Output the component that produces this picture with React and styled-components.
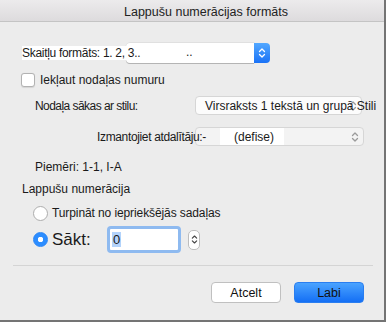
import React from 'react';
import styled, { createGlobalStyle } from 'styled-components';

const GlobalStyle = createGlobalStyle`
    html, body {
        margin: 0;
        padding: 0;
        background: #ececec;
    }
    * {
        box-sizing: border-box;
    }
`;

const Chevrons = ({ color = '#fff', w = 8, h = 12 }) => (
    <svg width={w} height={h} viewBox="0 0 8 12" fill="none">
        <path d="M1.5 4.5 L4 2 L6.5 4.5" stroke={color} strokeWidth="1.3" strokeLinecap="round" strokeLinejoin="round" />
        <path d="M1.5 7.5 L4 10 L6.5 7.5" stroke={color} strokeWidth="1.3" strokeLinecap="round" strokeLinejoin="round" />
    </svg>
);

const App = () => {
    return (
        <>
            <GlobalStyle />
            <Window>
                <TitleBar>
                    <TitleText>Lappušu numerācijas formāts</TitleText>
                </TitleBar>
                <Body>
                    <Row $top={21} $left={22} $h={20}>
                        <WhiteLabel>Skaitļu formāts: 1. 2, 3..</WhiteLabel>
                        <FormatPopup>..</FormatPopup>
                        <BlueStepper>
                            <Chevrons />
                        </BlueStepper>
                    </Row>

                    <Row $top={10} $left={21} $h={14}>
                        <CheckBox />
                        <Label $pad={5}>Iekļaut nodaļas numuru</Label>
                    </Row>

                    <Row $top={9} $left={35}>
                        <Label $w={160} $ls={-0.55}>Nodaļa sākas ar stilu:</Label>
                        <StylePopup $w={167} $light>
                            <PopupText>Virsraksts 1 tekstā un grupā Stili</PopupText>
                            <PopupArrows>
                                <Chevrons color="#9a9a9a" />
                            </PopupArrows>
                        </StylePopup>
                    </Row>

                    <Row $top={12} $left={97}>
                        <Label $w={98} $ls={-0.35}>Izmantojiet atdalītāju:-</Label>
                        <StylePopup $w={169}>
                            <DashBox>(defise)</DashBox>
                            <PopupArrows>
                                <Chevrons color="#9a9a9a" />
                            </PopupArrows>
                        </StylePopup>
                    </Row>

                    <Row $top={13} $left={35} $h={16}>
                        <Label>Piemēri: 1-1, I-A</Label>
                    </Row>

                    <Row $top={6} $left={22} $h={16}>
                        <Label>Lappušu numerācija</Label>
                    </Row>

                    <Row $top={8} $left={33} $h={16}>
                        <Radio />
                        <Label $pad={4} $ls={-0.1}>Turpināt no iepriekšējās sadaļas</Label>
                    </Row>

                    <Row $top={5} $left={33} $h={27}>
                        <Radio $checked />
                        <BigLabel>Sākt:</BigLabel>
                        <FocusInput>
                            <Selected>0</Selected>
                        </FocusInput>
                        <SmallStepper>
                            <Chevrons color="#444" w={7} h={11} />
                        </SmallStepper>
                    </Row>

                    <Separator />

                    <ButtonRow>
                        <Button>Atcelt</Button>
                        <Button $primary>Labi</Button>
                    </ButtonRow>
                </Body>
            </Window>
        </>
    );
}

export default App;

const Window = styled.div`
    width: 386px;
    height: 322px;
    background: #ececec;
    border-right: 2px solid #747474;
    border-bottom: 2px solid #747474;
    font-family: "Liberation Sans", Arial, sans-serif;
    font-size: 12px;
    color: #1a1a1a;
    display: flex;
    flex-direction: column;
    overflow: hidden;
`

const TitleBar = styled.div`
    height: 22px;
    flex: none;
    display: flex;
    align-items: center;
    justify-content: center;
    padding-left: 28px;
    padding-top: 2px;
    background: linear-gradient(#ecebec, #dddbdd);
    border-bottom: 1px solid #c4c4c4;
`

const TitleText = styled.span`
    font-size: 12.5px;
    color: #222;
`

const Body = styled.div`
    display: flex;
    flex-direction: column;
    flex: 1;
`

const Row = styled.div`
    display: flex;
    align-items: center;
    margin-top: ${p => p.$top}px;
    padding-left: ${p => p.$left}px;
    height: ${p => p.$h || 19}px;
    flex: none;
`

const Label = styled.span`
    padding-left: ${p => p.$pad || 0}px;
    width: ${p => p.$w ? `${p.$w}px` : 'auto'};
    flex: none;
    letter-spacing: ${p => p.$ls || 0}px;
    white-space: nowrap;
    position: relative;
    z-index: 1;
`

const WhiteLabel = styled.span`
    background: #fff;
    width: 116px;
    flex: none;
    height: 14px;
    line-height: 14px;
    letter-spacing: -0.3px;
    white-space: nowrap;
    position: relative;
    z-index: 1;
`

const FormatPopup = styled.div`
    width: 128px;
    height: 20px;
    flex: none;
    margin-left: -12px;
    background: #fff;
    border-radius: 4px 0 0 4px;
    box-shadow: 0 1px 0 #b4b4b4, 0 0 0 0.5px #d4d4d4;
    padding-left: 60px;
    line-height: 19px;
`

const BlueStepper = styled.div`
    width: 16px;
    height: 20px;
    flex: none;
    border-radius: 0 4px 4px 0;
    background: linear-gradient(#52a8ff, #1a72f6);
    display: flex;
    align-items: center;
    justify-content: center;
`

const CheckBox = styled.div`
    width: 14px;
    height: 14px;
    flex: none;
    background: #fff;
    border: 1px solid #b2b2b2;
    border-radius: 3px;
    box-shadow: 0 0.5px 1px rgba(0,0,0,0.1);
`

const StylePopup = styled.div`
    position: relative;
    width: ${p => p.$w}px;
    flex: none;
    height: 19px;
    background: ${p => p.$light ? '#fcfcfc' : '#f3f3f3'};
    border: 1px solid #d6d6d6;
    border-radius: 4px;
    display: flex;
    align-items: center;
`

const PopupText = styled.span`
    padding-left: 9px;
    white-space: nowrap;
    position: relative;
    z-index: 1;
`

const PopupArrows = styled.div`
    position: absolute;
    right: 4px;
    top: 3px;
`

const DashBox = styled.span`
    background: #fff;
    margin-left: 24px;
    height: 17px;
    line-height: 19px;
    padding: 0 10px 0 14px;
`

const Radio = styled.div`
    width: 15px;
    height: 15px;
    border-radius: 50%;
    flex: none;
    background: ${p => p.$checked ? 'radial-gradient(circle, #fff 0 2.5px, #2c8dff 3px)' : '#fff'};
    border: 1px solid ${p => p.$checked ? '#2a86f7' : '#adadad'};
`

const BigLabel = styled.span`
    font-size: 17px;
    padding-left: 4px;
    width: 59px;
    flex: none;
`

const FocusInput = styled.div`
    width: 74px;
    height: 27px;
    flex: none;
    border: 3px solid #8ebaf0;
    border-radius: 4px;
    background: #fff;
    padding-left: 2px;
    display: flex;
    align-items: center;
`

const Selected = styled.span`
    background: #b3d3fb;
    font-size: 13px;
    line-height: 15px;
    padding: 0 1px;
`

const SmallStepper = styled.div`
    margin-left: 7px;
    width: 12px;
    height: 20px;
    flex: none;
    border: 1px solid #bdbdbd;
    border-radius: 5px;
    background: #fff;
    display: flex;
    align-items: center;
    justify-content: center;
`

const Separator = styled.div`
    margin: 12px 11px 0 13px;
    height: 1px;
    flex: none;
    background: #d4d4d4;
`

const ButtonRow = styled.div`
    display: flex;
    justify-content: flex-end;
    gap: 13px;
    margin-top: 16px;
    padding-right: 20px;
`

const Button = styled.div`
    width: 70px;
    height: 21px;
    border-radius: 4px;
    display: flex;
    align-items: center;
    justify-content: center;
    font-size: 12.5px;
    color: #111;
    background: ${p => p.$primary ? 'linear-gradient(#4aa3ff, #146ff5)' : '#fff'};
    border: 1px solid ${p => p.$primary ? '#2a7ef0' : '#c0c0c0'};
`
